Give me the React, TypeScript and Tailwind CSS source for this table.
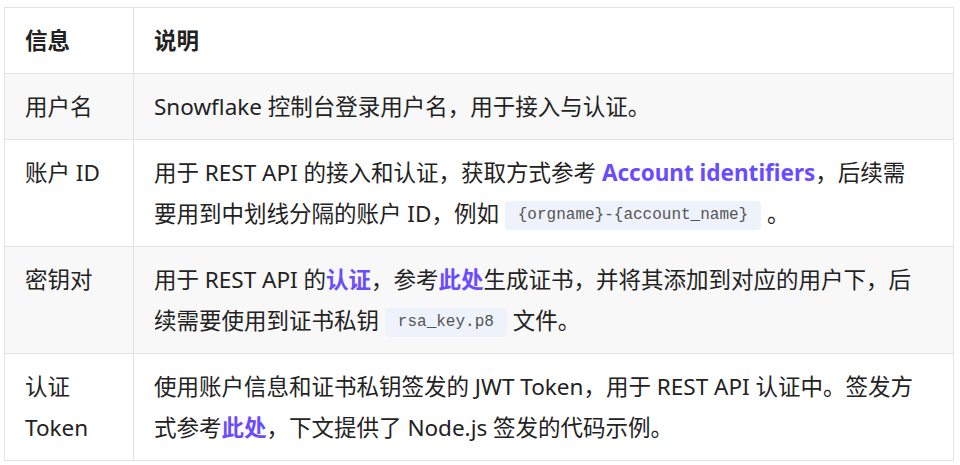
import React from "react";

const Link = ({ children }: { children: React.ReactNode }) => (
  <a className="font-bold text-[#6a4cff] no-underline">{children}</a>
);

const Code = ({ children }: { children: React.ReactNode }) => (
  <code
    className="inline-block rounded-[4px] bg-[#eef2fa] px-[13px] py-[5px] text-[16px] leading-[19px] text-[#555] align-[3px]"
    style={{ fontFamily: '"Liberation Mono", "DejaVu Sans Mono", monospace' }}
  >
    {children}
  </code>
);

export default function App() {
  const td = "border border-[#e3e3e3] px-[20px] py-[12px] align-top";
  return (
    <div
      className="bg-white w-[960px] h-[465px] pt-[7px] pl-[4px] text-[22.5px] leading-[41px] text-[#222]"
      style={{ fontFamily: '"Noto Sans", "Noto Sans CJK SC", sans-serif' }}
    >
      <table className="w-[950px] border-collapse">
        <colgroup>
          <col className="w-[129px]" />
          <col />
        </colgroup>
        <thead>
          <tr className="bg-white">
            <th className={`${td} text-left font-bold`}>信息</th>
            <th className={`${td} text-left font-bold`}>说明</th>
          </tr>
        </thead>
        <tbody>
          <tr className="bg-[#f8f8f8]">
            <td className={td}>用户名</td>
            <td className={td}>Snowflake 控制台登录用户名，用于接入与认证。</td>
          </tr>
          <tr className="bg-white">
            <td className={td}>账户 ID</td>
            <td className={td}>
              <span className="block whitespace-nowrap">
                用于 REST API 的接入和认证，获取方式参考 <Link>Account identifiers</Link>，后续需
              </span>
              <span className="block whitespace-nowrap">
                要用到中划线分隔的账户 ID，例如 <Code>{"{orgname}-{account_name}"}</Code> 。
              </span>
            </td>
          </tr>
          <tr className="bg-[#f8f8f8]">
            <td className={td}>密钥对</td>
            <td className={td}>
              <span className="block whitespace-nowrap">
                用于 REST API 的<Link>认证</Link>，参考<Link>此处</Link>生成证书，并将其添加到对应的用户下，后
              </span>
              <span className="block whitespace-nowrap">
                续需要使用到证书私钥 <Code>rsa_key.p8</Code> 文件。
              </span>
            </td>
          </tr>
          <tr className="bg-white">
            <td className={td}>
              <span className="block">认证</span>
              <span className="block">Token</span>
            </td>
            <td className={td}>
              <span className="block whitespace-nowrap">
                使用账户信息和证书私钥签发的 JWT Token，用于 REST API 认证中。签发方
              </span>
              <span className="block whitespace-nowrap">
                式参考<Link>此处</Link>，下文提供了 Node.js 签发的代码示例。
              </span>
            </td>
          </tr>
        </tbody>
      </table>
    </div>
  );
}
